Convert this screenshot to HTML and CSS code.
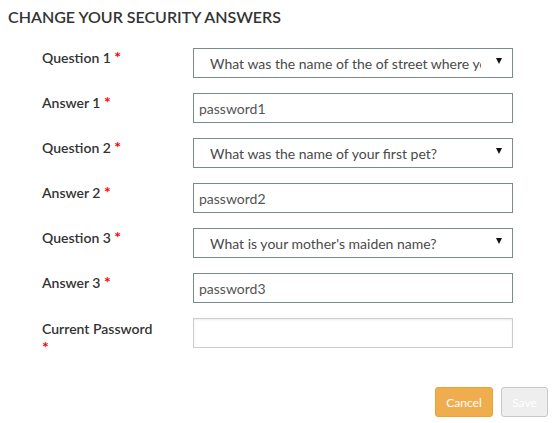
FILE: index.html
```html
<!DOCTYPE html>
<html>
<head>
<meta charset="utf-8">
<link rel="stylesheet" href="styles.css">
</head>
<body>
<h1 class="title">CHANGE YOUR SECURITY ANSWERS</h1>
<form class="form">
  <div class="grid">
    <label class="lbl">Question 1 <span class="req">*</span></label>
    <div class="select"><span class="select-text">What was the name of the of street where you grew up?</span><span class="caret"></span></div>

    <label class="lbl">Answer 1 <span class="req">*</span></label>
    <div class="input">password1</div>

    <label class="lbl">Question 2 <span class="req">*</span></label>
    <div class="select"><span class="select-text">What was the name of your first pet?</span><span class="caret"></span></div>

    <label class="lbl">Answer 2 <span class="req">*</span></label>
    <div class="input">password2</div>

    <label class="lbl">Question 3 <span class="req">*</span></label>
    <div class="select"><span class="select-text">What is your mother's maiden name?</span><span class="caret"></span></div>

    <label class="lbl">Answer 3 <span class="req">*</span></label>
    <div class="input">password3</div>

    <label class="lbl lbl-wrap">Current Password <span class="req">*</span></label>
    <div class="input input-empty"></div>
  </div>
  <div class="actions">
    <button type="button" class="btn btn-cancel">Cancel</button>
    <button type="button" class="btn btn-save" disabled>Save</button>
  </div>
</form>
</body>
</html>
```

FILE: styles.css
```css
html, body {
  margin: 0;
  padding: 0;
  background: #fff;
}
body {
  font-family: Lato, "Open Sans", sans-serif;
  color: #333;
  padding: 7px 6px 0 8px;
}
.title {
  margin: 0;
  font-size: 16px;
  font-weight: 600;
  line-height: 20px;
  color: #333;
}
.form {
  margin-top: 21px;
  padding-left: 34px;
}
.grid {
  display: grid;
  grid-template-columns: 151px 320px;
  row-gap: 15px;
}
.lbl {
  font-size: 14px;
  font-weight: 600;
  line-height: 18px;
  color: #333;
  margin-top: 1px;
}
.lbl-wrap {
  width: 118px;
  line-height: 19px;
}
.req {
  color: #f00;
  font-weight: 700;
  font-size: 16px;
  line-height: 14px;
}
.select, .input {
  box-sizing: border-box;
  height: 30px;
  border: 1px solid #7b8a8a;
  font-size: 14px;
  color: #555;
  display: flex;
  align-items: center;
  background: #fff;
}
.select {
  padding: 0 10px 0 16px;
  color: #4a4a4a;
}
.select-text {
  white-space: nowrap;
  overflow: hidden;
  width: 271px;
  flex: none;
}
.caret {
  margin-left: auto;
  width: 0;
  height: 0;
  border-left: 3.5px solid transparent;
  border-right: 3.5px solid transparent;
  border-top: 6px solid #111;
  margin-top: -4px;
}
.input {
  padding: 0 6px 0 5px;
}
.input-empty {
  border-color: #ccc;
  box-shadow: inset 0 1px 2px rgba(0,0,0,0.08);
}
.actions {
  display: flex;
  justify-content: flex-end;
  gap: 8px;
  margin-top: 30px;
}
.btn {
  font-family: Lato, "Open Sans", sans-serif;
  font-size: 12px;
  height: 30px;
  border-radius: 3px;
  padding: 0;
  color: #fff;
  cursor: pointer;
}
.btn-cancel {
  width: 58px;
  background: #f0ad4e;
  border: 1px solid #eea236;
}
.btn-save {
  width: 47px;
  background: #eee;
  border: 1px solid #c8c8c8;
  color: #fff;
}
```
